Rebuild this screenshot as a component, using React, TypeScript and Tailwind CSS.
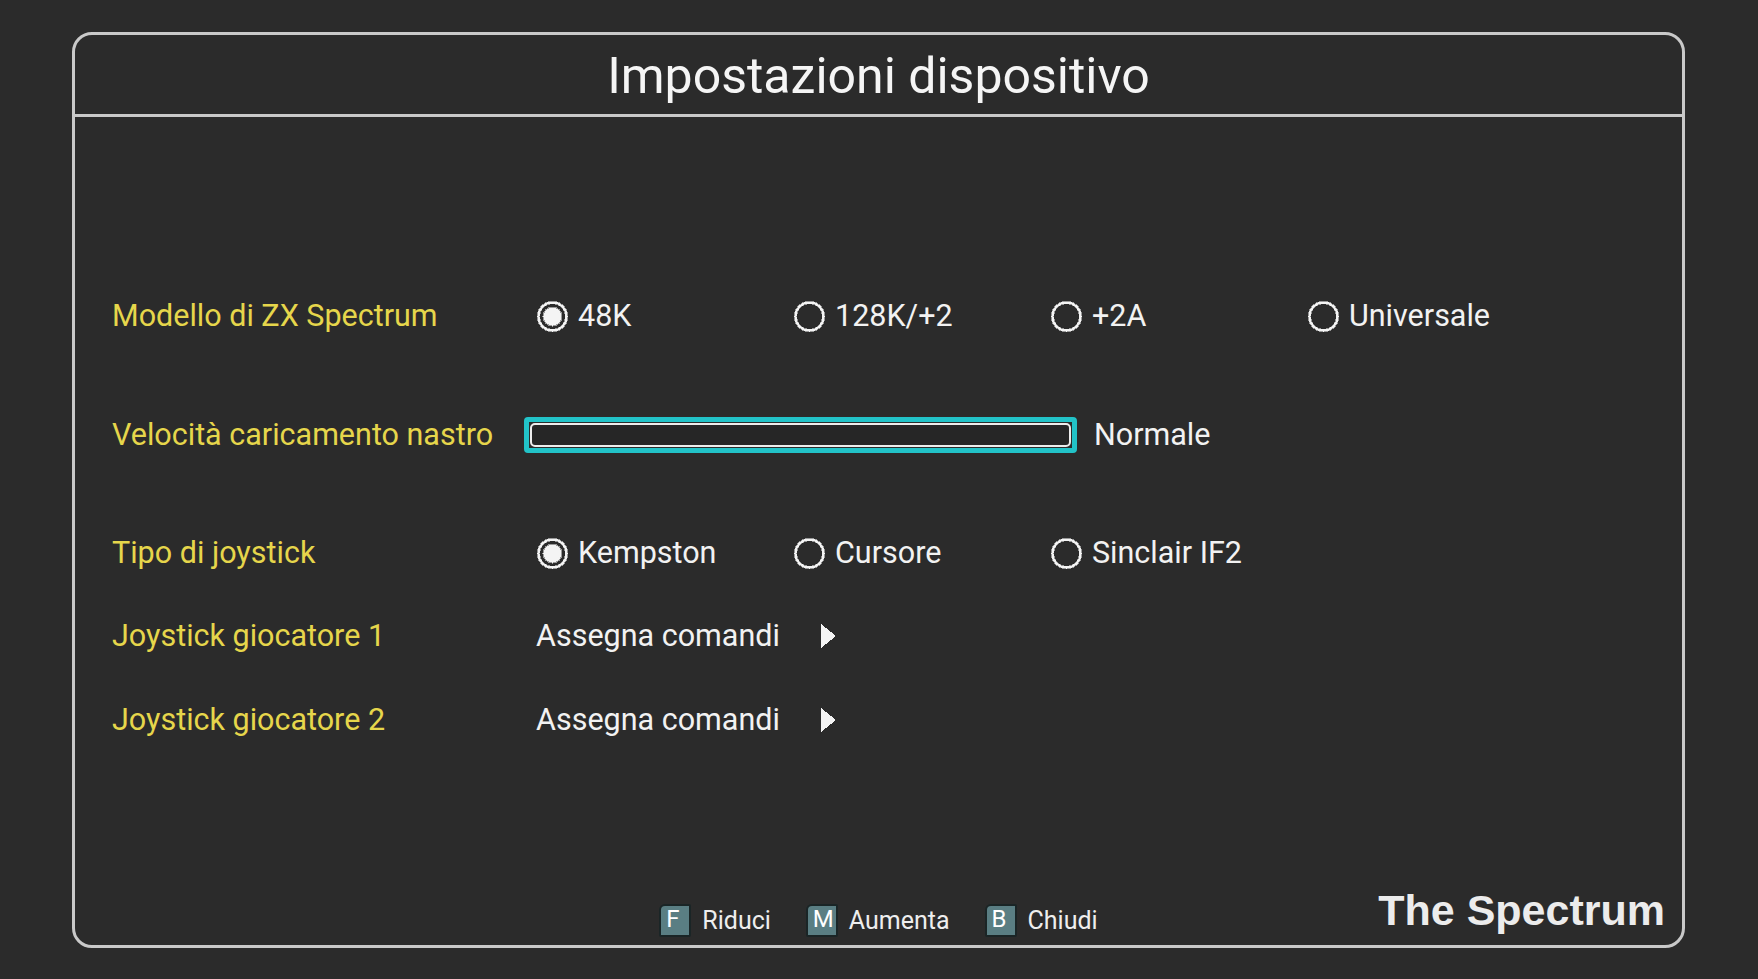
import { ReactNode } from 'react'

const font = { fontFamily: 'Roboto, "Noto Sans", sans-serif' }

function Radio({ checked, label }: { checked?: boolean; label: string }) {
  return (
    <div className="w-[257px] flex items-center gap-[9px]">
      <svg width="33" height="33" viewBox="0 0 33 33" shapeRendering="crispEdges">
        <circle cx="16.5" cy="16.5" r="14" fill="none" stroke="#9a9a9a" strokeWidth="3.5" />
        <circle cx="16.5" cy="16.5" r="14" fill="none" stroke="#f4f4f4" strokeWidth="2" />
        {checked && <circle cx="16.5" cy="16.5" r="9.5" fill="#f4f4f4" stroke="#9a9a9a" strokeWidth="1" />}
      </svg>
      <span className="text-[30.5px] text-[#f2f2f2] leading-none">{label}</span>
    </div>
  )
}

function Row({ label, children, className }: { label: string; children: ReactNode; className?: string }) {
  return (
    <div className={`flex items-center h-[50px] ${className ?? ''}`}>
      <div className="w-[424px] shrink-0 text-[30.5px] text-[#e6d64b] leading-none">{label}</div>
      <div className="flex items-center">{children}</div>
    </div>
  )
}

function Assign() {
  return (
    <div className="flex items-center">
      <span className="text-[30.5px] text-[#f2f2f2] leading-none">Assegna comandi</span>
      <svg className="ml-[40px]" width="17" height="26" viewBox="0 0 17 26" shapeRendering="crispEdges">
        <polygon points="1,1 16,13 1,25" fill="#f4f4f4" />
      </svg>
    </div>
  )
}

function Key({ k, label }: { k: string; label: string }) {
  return (
    <div className="flex items-center gap-[11px]">
      <div
        className="w-[32px] h-[33px] bg-[#5a7e83] border-2 border-[#1a2526] rounded-[2px] rounded-tl-[6px] text-white text-[24px] leading-none pl-[5px] pt-[1px]"
        style={font}
      >
        {k}
      </div>
      <span className="text-[25px] text-[#eeeeee] leading-none">{label}</span>
    </div>
  )
}

export default function App() {
  return (
    <div
      className="h-screen w-screen bg-[#2b2b2b] pl-[72px] pr-[73px] pt-[32px] pb-[31px] overflow-hidden"
      style={font}
    >
      <div className="h-full flex flex-col border-[3px] border-[#c9c9c9] rounded-[20px]">
        <div className="h-[82px] shrink-0 flex items-center justify-center border-b-[3px] border-[#c9c9c9]">
          <h1 className="text-[50px] text-[#f5f5f5] leading-none pt-[3px]">Impostazioni dispositivo</h1>
        </div>

        <div className="flex-1 flex flex-col pl-[37px] pt-[174px]">
          <Row label="Modello di ZX Spectrum">
            <Radio checked label="48K" />
            <Radio label="128K/+2" />
            <Radio label="+2A" />
            <Radio label="Universale" />
          </Row>

          <Row label="Velocità caricamento nastro" className="mt-[69px]">
            <div className="-ml-[12px] w-[553px] h-[36px] rounded-[4px] border-[5px] border-[#22c3c8] p-[1px]">
              <div className="h-full rounded-[5px] border-2 border-[#ededed] bg-[#262626]" />
            </div>
            <span className="ml-[17px] text-[30.5px] text-[#f2f2f2] leading-none">Normale</span>
          </Row>

          <Row label="Tipo di joystick" className="mt-[68px]">
            <Radio checked label="Kempston" />
            <Radio label="Cursore" />
            <Radio label="Sinclair IF2" />
          </Row>

          <Row label="Joystick giocatore 1" className="mt-[33px]">
            <Assign />
          </Row>

          <Row label="Joystick giocatore 2" className="mt-[34px]">
            <Assign />
          </Row>
        </div>

        <div className="grid grid-cols-[1fr_auto_1fr] items-end pb-[8px] shrink-0">
          <div />
          <div className="flex items-center gap-[35px]">
            <Key k="F" label="Riduci" />
            <Key k="M" label="Aumenta" />
            <Key k="B" label="Chiudi" />
          </div>
          <div className="flex justify-end pr-[17px] pb-[5px]">
            <span
              className="text-[43px] font-bold text-[#ececec] leading-none"
              style={{ fontFamily: '"Liberation Sans", Arial, sans-serif' }}
            >
              The Spectrum
            </span>
          </div>
        </div>
      </div>
    </div>
  )
}
